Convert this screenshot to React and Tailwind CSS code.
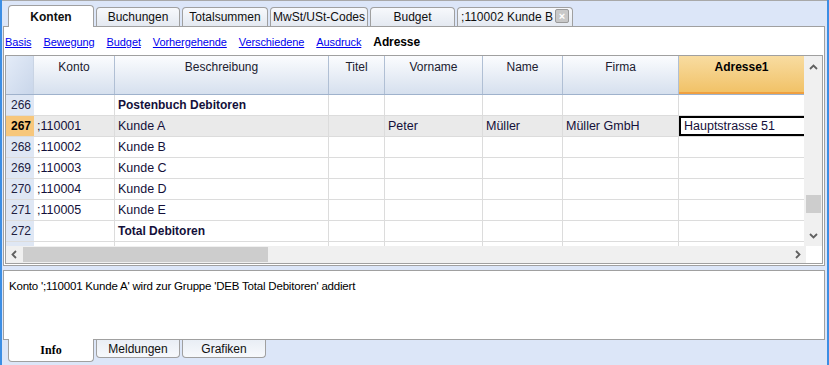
import React from "react";

const cols = [
  { key: "nr", w: 28 },
  { key: "konto", label: "Konto", w: 81 },
  { key: "beschr", label: "Beschreibung", w: 214 },
  { key: "titel", label: "Titel", w: 56 },
  { key: "vorname", label: "Vorname", w: 98 },
  { key: "name", label: "Name", w: 80 },
  { key: "firma", label: "Firma", w: 116 },
  { key: "adresse1", label: "Adresse1", w: 126 },
];

const rows = [
  { nr: "266", beschr: "Postenbuch Debitoren", bold: true },
  { nr: "267", konto: ";110001", beschr: "Kunde A", vorname: "Peter", name: "Müller", firma: "Müller GmbH", adresse1: "Hauptstrasse 51", active: true },
  { nr: "268", konto: ";110002", beschr: "Kunde B" },
  { nr: "269", konto: ";110003", beschr: "Kunde C" },
  { nr: "270", konto: ";110004", beschr: "Kunde D" },
  { nr: "271", konto: ";110005", beschr: "Kunde E" },
  { nr: "272", beschr: "Total Debitoren", bold: true },
];

const topTabs = [
  { label: "Konten", w: 86, active: true },
  { label: "Buchungen", w: 84 },
  { label: "Totalsummen", w: 86 },
  { label: "MwSt/USt-Codes", w: 98 },
  { label: "Budget", w: 85 },
  { label: ";110002 Kunde B", w: 116, close: true },
];

const links = ["Basis", "Bewegung", "Budget", "Vorhergehende", "Verschiedene", "Ausdruck"];

const Tab = ({ tab }) => (
  <div
    className={
      "relative flex items-center justify-center rounded-t-[4px] border border-b-0 border-[#a0a0a0] text-[12px] text-[#101010] " +
      (tab.active
        ? "h-[22px] bg-white font-bold z-10 -mb-px"
        : "h-[19px] bg-gradient-to-b from-[#f7f9fc] to-[#e4e9f1] mt-[3px]")
    }
    style={{ width: tab.w }}
  >
    <span className={tab.close ? "pr-4" : ""}>{tab.label}</span>
    {tab.close && (
      <span className="absolute right-[3px] top-[1px] flex h-[14px] w-[14px] items-center justify-center rounded-[2px] border border-[#9a9a9a] bg-[#c8c8c8] text-[11px] font-bold leading-none text-white">
        ×
      </span>
    )}
  </div>
);

export default function App() {
  return (
    <div
      className="flex h-[365px] w-[829px] flex-col overflow-hidden border-l-2 border-r-2 border-[#3c8ee4] bg-[#dce6f8]"
      style={{ fontFamily: '"Liberation Sans", Arial, sans-serif' }}
    >
      <div className="h-px bg-[#a8a8a8]" />
      {/* top tabs */}
      <div className="flex h-[25px] items-end gap-[2px] pl-[6px]">
        {topTabs.map((t) => (
          <Tab key={t.label} tab={t} />
        ))}
      </div>

      {/* main panel */}
      <div className="ml-px mr-[2px] flex h-[240px] flex-col border border-[#a0a0a0] bg-white">
        <div className="flex h-[28px] items-center gap-[12px] pl-[1px] pt-[2px] text-[11px] tracking-[-0.1px]">
          {links.map((l) => (
            <span key={l} className="text-[#0000ee] underline">
              {l}
            </span>
          ))}
          <span className="text-[12px] font-bold text-black">Adresse</span>
        </div>

        {/* table */}
        <div className="ml-px mr-px flex h-[209px] flex-col border border-[#a0a0a0]">
          <div className="flex h-[190px]">
            <div className="flex flex-col overflow-hidden">
              {/* header */}
              <div className="flex h-[39px] border-b border-[#9fb2cc]">
                {cols.map((c) => (
                  <div
                    key={c.key}
                    className={
                      "flex shrink-0 justify-center border-r pt-[2px] text-[12px] " +
                      (c.key === "adresse1"
                        ? "border-[#f0a040] bg-gradient-to-b from-[#f8dca0] to-[#f1c267] font-bold text-black border-b-2 border-b-[#f0a040]"
                        : c.key === "nr"
                        ? "border-[#c9d4e4] bg-gradient-to-br from-[#e4ecf8] to-[#c9d6ea]"
                        : "border-[#b0bfd4] bg-gradient-to-b from-[#fbfcfe] to-[#d6e0ee] text-[#202030]")
                    }
                    style={{ width: c.w }}
                  >
                    {c.label}
                  </div>
                ))}
              </div>
              {/* rows */}
              {rows.map((r) => (
                <div
                  key={r.nr}
                  className={"flex h-[21px] border-b border-[#dcdcdc] " + (r.active ? "bg-[#eaeaea]" : "")}
                >
                  {cols.map((c) => {
                    if (c.key === "nr")
                      return (
                        <div
                          key={c.key}
                          className={
                            "flex shrink-0 items-center pl-[5px] text-[12px] " +
                            (r.active ? "bg-[#f7c77c] font-bold text-black" : "bg-[#dfe7f4] text-[#202040]")
                          }
                          style={{ width: c.w }}
                        >
                          {r.nr}
                        </div>
                      );
                    const val = r[c.key];
                    const editing = r.active && c.key === "adresse1";
                    return (
                      <div
                        key={c.key}
                        className={
                          "flex shrink-0 items-center border-r border-[#dcdcdc] pl-[3px] text-[12.5px] text-[#14103a] " +
                          (r.bold && c.key === "beschr" ? "font-bold text-[12px] " : "") +
                          (editing ? "border-2 border-black bg-white pl-[2px]" : "")
                        }
                        style={{ width: c.w }}
                      >
                        {val}
                      </div>
                    );
                  })}
                </div>
              ))}
              <div className="flex h-[4px]">
                {cols.map((c) => (
                  <div
                    key={c.key}
                    className={"shrink-0 border-r " + (c.key === "nr" ? "bg-[#dfe7f4] border-[#dfe7f4]" : "border-[#dcdcdc]")}
                    style={{ width: c.w }}
                  />
                ))}
              </div>
            </div>
            {/* vertical scrollbar */}
            <div className="relative flex w-[18px] flex-col items-center bg-[#f0f0f0]">
              <svg className="mt-[8px]" width="9" height="6" viewBox="0 0 9 6">
                <path d="M1 5 L4.5 1.5 L8 5" fill="none" stroke="#606060" strokeWidth="1.8" />
              </svg>
              <div className="mt-[125px] h-[18px] w-[15px] bg-[#cdcdcd]" />
              <svg className="mt-[20px]" width="9" height="6" viewBox="0 0 9 6">
                <path d="M1 1 L4.5 4.5 L8 1" fill="none" stroke="#606060" strokeWidth="1.8" />
              </svg>
            </div>
          </div>
          {/* horizontal scrollbar */}
          <div className="flex h-[17px]">
            <div className="flex w-[800px] items-center bg-[#f0f0f0]">
              <svg className="ml-[5px]" width="6" height="9" viewBox="0 0 6 9">
                <path d="M5 1 L1.5 4.5 L5 8" fill="none" stroke="#606060" strokeWidth="1.8" />
              </svg>
              <div className="ml-[6px] h-[15px] w-[245px] bg-[#cdcdcd]" />
              <svg className="ml-auto mr-[5px]" width="6" height="9" viewBox="0 0 6 9">
                <path d="M1 1 L4.5 4.5 L1 8" fill="none" stroke="#606060" strokeWidth="1.8" />
              </svg>
            </div>
            <div className="flex-1 bg-white" />
          </div>
        </div>
      </div>

      {/* info panel */}
      <div className="ml-px mr-[2px] mt-[4px] h-[70px] border border-[#a0a0a0] bg-white px-[5px] pt-[7px] text-[11.5px] tracking-[-0.2px] text-black">
        Konto ';110001 Kunde A' wird zur Gruppe 'DEB Total Debitoren' addiert
      </div>

      {/* bottom tabs */}
      <div className="flex items-start gap-[2px] pl-[6px]">
        <div
          className="z-10 -mt-px flex h-[23px] w-[86px] items-center justify-center rounded-b-[4px] border border-t-0 border-[#a0a0a0] bg-white text-[12px] font-bold"
          style={{ fontFamily: '"Liberation Serif", serif' }}
        >
          Info
        </div>
        {["Meldungen", "Grafiken"].map((l) => (
          <div
            key={l}
            className="flex h-[18px] w-[84px] items-center justify-center rounded-b-[4px] border border-t-0 border-[#a0a0a0] bg-gradient-to-b from-[#e9eef5] to-[#f7f9fc] text-[12px] text-[#101010]"
          >
            {l}
          </div>
        ))}
      </div>
    </div>
  );
}
